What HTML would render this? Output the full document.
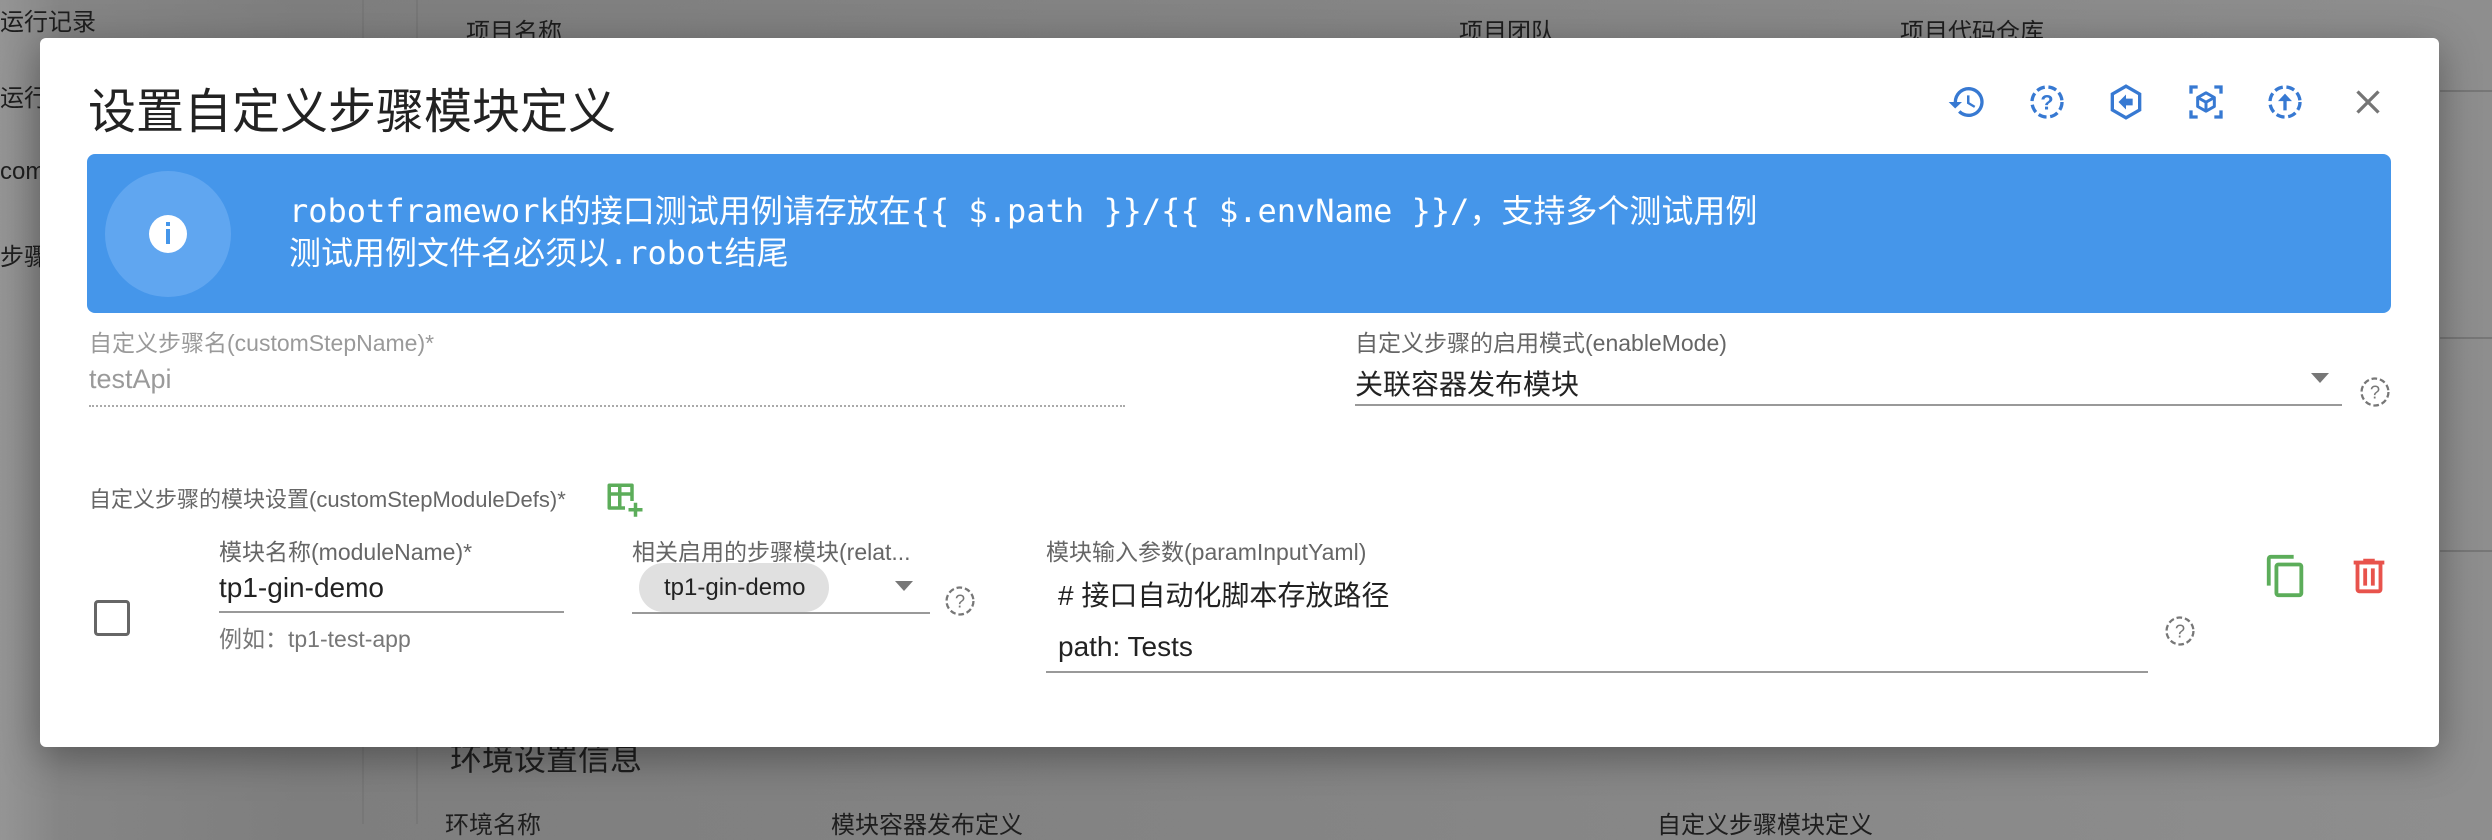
<!DOCTYPE html>
<html><head><meta charset="utf-8"><style>
*{margin:0;padding:0;box-sizing:border-box}
body{width:2492px;height:824px;overflow:hidden;position:relative;background:linear-gradient(90deg,#959595 0,#858585 60px,#7e7e7e 300px,#858585 1400px,#8e8e8e 2492px);font-family:"Liberation Sans","Noto Sans CJK SC",sans-serif}
.a{position:absolute;white-space:nowrap}
.bg{color:#1e1e1e;font-size:24px}
.dlg{position:absolute;left:40px;top:38px;width:2399px;height:709px;background:#fff;border-radius:6px;box-shadow:0 10px 40px rgba(0,0,0,.35)}
.lbl{color:#9a9a9a;font-size:23px}
.lbl2{color:#666;font-size:23px}
.val{color:#222;font-size:28px}
.ic{position:absolute}
</style></head><body>
<div class="a bg" style="left:0;top:2px">运行记录</div>
<div class="a bg" style="left:0;top:78px">运行</div>
<div class="a bg" style="left:0;top:158px">com</div>
<div class="a bg" style="left:0;top:237px">步骤</div>
<div class="a" style="left:362px;top:0;width:2px;height:824px;background:#777"></div>
<div class="a" style="left:416px;top:0;width:2px;height:824px;background:#777"></div>
<div class="a bg" style="left:466px;top:12px">项目名称</div>
<div class="a bg" style="left:1459px;top:12px">项目团队</div>
<div class="a bg" style="left:1900px;top:12px">项目代码仓库</div>
<div class="a" style="left:2440px;top:90px;width:52px;height:2px;background:#777"></div>
<div class="a" style="left:2440px;top:337px;width:52px;height:2px;background:#777"></div>
<div class="a" style="left:2440px;top:550px;width:52px;height:2px;background:#777"></div>
<div class="a bg" style="left:450px;top:734px;font-size:32px">环境设置信息</div>
<div class="a bg" style="left:445px;top:805px">环境名称</div>
<div class="a bg" style="left:831px;top:805px">模块容器发布定义</div>
<div class="a bg" style="left:1657px;top:805px">自定义步骤模块定义</div>

<div class="dlg"></div>
<div class="a" style="left:88px;top:72px;font-size:48px;color:#222">设置自定义步骤模块定义</div>

<svg class="ic" style="left:1947px;top:82px" width="40" height="40" viewBox="0 0 24 24"><path fill="#3779d2" d="M13 3a9 9 0 0 0-9 9H1l3.9 3.9L9 12H6a7 7 0 1 1 2.05 4.95l-1.42 1.42A9 9 0 1 0 13 3zm-1 5v5l4.28 2.54.72-1.21-3.5-2.08V8H12z"/></svg>
<svg class="ic" style="left:2027px;top:82px" width="40" height="40" viewBox="0 0 24 24"><circle cx="12" cy="12" r="9" fill="none" stroke="#3779d2" stroke-width="2" stroke-dasharray="5 2.2"/><text x="12" y="16.5" text-anchor="middle" font-size="13" font-weight="bold" fill="#3779d2" font-family="Liberation Sans">?</text></svg>
<svg class="ic" style="left:2106px;top:82px" width="40" height="40" viewBox="0 0 24 24"><path d="M12 2.5l8.2 4.75v9.5L12 21.5l-8.2-4.75v-9.5z" fill="none" stroke="#3779d2" stroke-width="2"/><path d="M7.5 12l4.5-4.5V10h4v4h-4v2.5z" fill="#3779d2"/></svg>
<svg class="ic" style="left:2186px;top:82px" width="40" height="40" viewBox="0 0 24 24"><path d="M3 7V3h4M17 3h4v4M21 17v4h-4M7 21H3v-4" fill="none" stroke="#3779d2" stroke-width="2"/><path d="M12 6.5l5 2.8v5.4L12 17.5l-5-2.8V9.3z M7 9.3l5 2.8 5-2.8 M12 12.1v5.4" fill="none" stroke="#3779d2" stroke-width="1.8" stroke-linejoin="round"/></svg>
<svg class="ic" style="left:2265px;top:82px" width="40" height="40" viewBox="0 0 24 24"><circle cx="12" cy="12" r="9" fill="none" stroke="#3779d2" stroke-width="2" stroke-dasharray="5 2.2"/><path d="M12 7l-4.2 4.5H11V17h2v-5.5h3.2z" fill="#3779d2"/></svg>
<svg class="ic" style="left:2350px;top:84px" width="36" height="36" viewBox="0 0 24 24"><path d="M5 5l14 14M19 5L5 19" stroke="#757575" stroke-width="2.2"/></svg>

<div class="a" style="left:87px;top:154px;width:2304px;height:159px;background:#4596ea;border-radius:8px;overflow:hidden">
<div class="a" style="left:18px;top:17px;width:126px;height:126px;border-radius:50%;background:#60a6f0"></div>
<div class="a" style="left:62px;top:61px;width:38px;height:38px;border-radius:50%;background:#fff"></div>
<div class="a" style="left:79px;top:68px;width:4px;height:4px;background:#4596ea"></div>
<div class="a" style="left:79px;top:75px;width:4px;height:15px;background:#4596ea"></div>
<div class="a" style="left:202px;top:32px;color:#fff;font-size:32px;font-family:'DejaVu Sans Mono','Liberation Mono','Noto Sans CJK SC',monospace">robotframework的接口测试用例请存放在{{ $.path }}/{{ $.envName }}/，支持多个测试用例</div>
<div class="a" style="left:202px;top:74px;color:#fff;font-size:32px;font-family:'DejaVu Sans Mono','Liberation Mono','Noto Sans CJK SC',monospace">测试用例文件名必须以.robot结尾</div>
</div>

<div class="a lbl" style="left:89px;top:324px">自定义步骤名(customStepName)*</div>
<div class="a" style="left:89px;top:364px;color:#9a9a9a;font-size:27px">testApi</div>
<div class="a" style="left:89px;top:405px;width:1036px;border-top:2px dotted #aaa"></div>

<div class="a lbl2" style="left:1355px;top:324px">自定义步骤的启用模式(enableMode)</div>
<div class="a val" style="left:1355px;top:363px">关联容器发布模块</div>
<div class="a" style="left:1355px;top:404px;width:987px;height:2px;background:#999"></div>
<div class="a" style="left:2311px;top:373px;width:0;height:0;border-left:9px solid transparent;border-right:9px solid transparent;border-top:10px solid #777"></div>
<svg class="ic" style="left:2358px;top:375px" width="34" height="34" viewBox="0 0 24 24"><circle cx="12" cy="12" r="9.5" fill="none" stroke="#777" stroke-width="1.6" stroke-dasharray="4 2"/><text x="12" y="16.5" text-anchor="middle" font-size="13" fill="#777" font-family="Liberation Sans">?</text></svg>

<div class="a lbl2" style="left:89px;top:482px;font-size:22px">自定义步骤的模块设置(customStepModuleDefs)*</div>
<svg class="ic" style="left:604px;top:480px" width="42" height="42" viewBox="0 0 24 24"><path fill="#5cad5a" d="M2 2h14a1 1 0 0 1 1 1v9h-2V9h-5v6h2v2H3a1 1 0 0 1-1-1V3a1 1 0 0 1 1-1zm2 2v3h4V4H4zm6 0v3h5V4h-5zM4 9v6h4V9H4z"/><path d="M18 13v8M14 17h8" stroke="#5cad5a" stroke-width="2"/></svg>

<div class="a" style="left:94px;top:600px;width:36px;height:36px;border:3px solid #666;border-radius:4px"></div>

<div class="a lbl2" style="left:219px;top:533px">模块名称(moduleName)*</div>
<div class="a val" style="left:219px;top:572px">tp1-gin-demo</div>
<div class="a" style="left:219px;top:611px;width:345px;height:2px;background:#999"></div>
<div class="a lbl2" style="left:219px;top:620px;color:#777">例如：tp1-test-app</div>

<div class="a lbl2" style="left:632px;top:533px">相关启用的步骤模块(relat...</div>
<div class="a" style="left:639px;top:563px;width:190px;height:49px;border-radius:25px;background:#e0e0e0"></div>
<div class="a" style="left:664px;top:574px;font-size:24px;color:#222">tp1-gin-demo</div>
<div class="a" style="left:895px;top:581px;width:0;height:0;border-left:9px solid transparent;border-right:9px solid transparent;border-top:10px solid #777"></div>
<div class="a" style="left:632px;top:612px;width:298px;height:2px;background:#999"></div>
<svg class="ic" style="left:943px;top:584px" width="34" height="34" viewBox="0 0 24 24"><circle cx="12" cy="12" r="9.5" fill="none" stroke="#777" stroke-width="1.6" stroke-dasharray="4 2"/><text x="12" y="16.5" text-anchor="middle" font-size="13" fill="#777" font-family="Liberation Sans">?</text></svg>

<div class="a lbl2" style="left:1046px;top:533px">模块输入参数(paramInputYaml)</div>
<div class="a val" style="left:1058px;top:574px">#&nbsp;接口自动化脚本存放路径</div>
<div class="a val" style="left:1058px;top:631px">path: Tests</div>
<div class="a" style="left:1046px;top:671px;width:1102px;height:2px;background:#999"></div>
<svg class="ic" style="left:2163px;top:614px" width="34" height="34" viewBox="0 0 24 24"><circle cx="12" cy="12" r="9.5" fill="none" stroke="#777" stroke-width="1.6" stroke-dasharray="4 2"/><text x="12" y="16.5" text-anchor="middle" font-size="13" fill="#777" font-family="Liberation Sans">?</text></svg>

<svg class="ic" style="left:2263px;top:553px" width="46" height="46" viewBox="0 0 24 24"><path fill="#5cad5a" d="M16 1H4a2 2 0 0 0-2 2v14h2V3h12V1zm3 4H8a2 2 0 0 0-2 2v14a2 2 0 0 0 2 2h11a2 2 0 0 0 2-2V7a2 2 0 0 0-2-2zm0 16H8V7h11v14z"/></svg>
<svg class="ic" style="left:2346px;top:553px" width="46" height="46" viewBox="0 0 24 24"><path fill="#e8534c" d="M9 3v1H4v2h1v13a2 2 0 0 0 2 2h10a2 2 0 0 0 2-2V6h1V4h-5V3H9zM7 6h10v13H7V6zm2 2v9h2V8H9zm4 0v9h2V8h-2z"/></svg>
</body></html>
